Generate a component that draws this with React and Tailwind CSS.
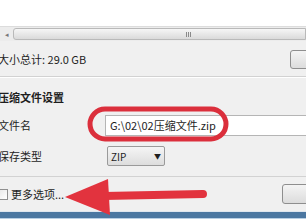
import React from 'react'

const font = { fontFamily: '"Microsoft YaHei", "Noto Sans CJK SC", "Noto Sans", sans-serif' }

export default function App() {
  return (
    <div
      className="relative w-[306px] h-[219px] overflow-hidden bg-[#f0f0f0] text-[11px] text-[#1e1e1e]"
      style={font}
    >
      {/* list area */}
      <div className="h-[26px] bg-white" />

      {/* horizontal scrollbar */}
      <div className="flex h-[15px] border-t border-[#dcdcdc] bg-[#ececec]">
        <div className="flex w-[13px] items-center justify-center text-[7px] text-[#777]">◂</div>
        <div className="relative my-[1px] flex-1 rounded-l-[3px] border border-[#b9b9b9] bg-gradient-to-b from-[#f6f6f6] to-[#dadada]">
          <div className="absolute left-[172px] top-[3px] flex gap-[1px]">
            <div className="h-[5px] w-[1px] bg-[#8a8a8a]" />
            <div className="h-[5px] w-[1px] bg-[#8a8a8a]" />
            <div className="h-[5px] w-[1px] bg-[#8a8a8a]" />
          </div>
        </div>
      </div>

      {/* total size */}
      <div className="flex h-[36px] items-center justify-between border-b border-[#d2d2d2] pl-0">
        <span className="-ml-[2px] pt-[2px]">大小总计: 29.0 GB</span>
        <div className="mr-[-6px] mt-[1px] h-[19px] w-[22px] rounded-[3px] border border-[#8e8e8e] bg-gradient-to-b from-[#f4f4f4] to-[#dcdcdc]" />
      </div>

      {/* settings */}
      <div className="border-t border-white">
        <div className="-ml-[2px] flex h-[31px] items-end pb-[4px] font-bold">压缩文件设置</div>

        <div className="flex h-[32px] items-center">
          <span className="-ml-[2px] w-[107px] pt-[1px]">文件名</span>
          <div className="flex h-[21px] flex-1 items-center border border-[#b5b5b5] border-r-0 bg-white pl-[4px] pt-[1px]">
            G:\02\02压缩文件.zip
          </div>
        </div>

        <div className="flex h-[30px] items-center">
          <span className="-ml-[2px] w-[109px]">保存类型</span>
          <div className="flex h-[20px] w-[58px] items-center justify-between rounded-[2px] border border-[#9a9a9a] bg-gradient-to-b from-[#f5f5f5] to-[#dddddd] px-[3px]">
            <span className="text-[10px]">ZIP</span>
            <span className="text-[7px]">▼</span>
          </div>
        </div>
      </div>

      {/* more options */}
      <div className="mt-[5px] flex h-[35px] items-center justify-between border-t border-[#d2d2d2]">
        <div className="-ml-[3px] flex items-center gap-[3px]">
          <div className="h-[11px] w-[11px] border border-[#8f8f8f] bg-gradient-to-br from-[#e6e6e6] to-white" />
          <span>更多选项...</span>
        </div>
        <div className="mr-[-20px] mb-[1px] h-[20px] w-[44px] rounded-[3px] border border-[#8e8e8e] bg-gradient-to-b from-[#f4f4f4] to-[#dcdcdc]" />
      </div>

      {/* window frame bottom */}
      <div className="h-[1px] bg-[#dfe6ee]" />
      <div className="h-[6px] bg-[#4b77a1]" />
      <div className="h-[1px] bg-[#b8cfe4]" />
      <div className="h-[10px] bg-[#2c7fd4]" />

      {/* annotations */}
      <svg className="pointer-events-none absolute left-0 top-0" width="306" height="219" viewBox="0 0 306 219">
        <rect x="90" y="109" width="136" height="30" rx="15" ry="15" fill="none" stroke="#db2f3c" strokeWidth="5" />
        <line x1="104" y1="196" x2="203" y2="194" stroke="#e2333e" strokeWidth="8" strokeLinecap="round" />
        <polygon points="65,197 108,179 110,215" fill="#e2333e" />
      </svg>
    </div>
  )
}
